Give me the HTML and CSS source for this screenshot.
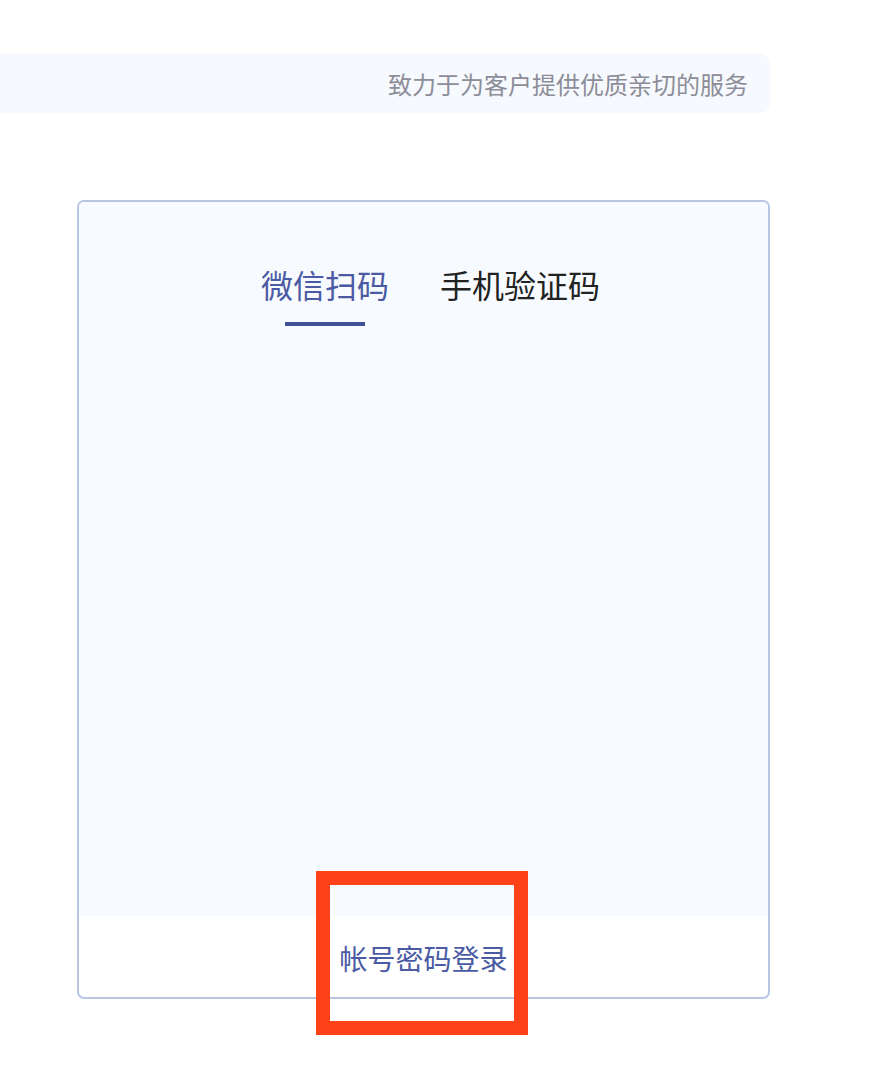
FILE: index.html
```html
<!DOCTYPE html>
<html lang="zh-CN">
<head>
    <meta charset="UTF-8">
    <meta name="viewport" content="width=device-width, initial-scale=1.0">
    <title>登录</title>
<link rel="stylesheet" href="styles.css">
</head>
<body>
    <div class="page">
        <div class="slogan">
            <p>致力于为客户提供优质亲切的服务</p>
        </div>

        <div class="login-box">
            <div class="login-main">
                <div class="tabs">
                    <div class="tab active">微信扫码</div>
                    <div class="tab">手机验证码</div>
                </div>
                <div class="qr-area"></div>
            </div>
            <div class="login-foot">
                <a class="switch-link" href="#">帐号密码登录</a>
            </div>
            <div class="highlight"></div>
        </div>
    </div>
</body>
</html>
```

FILE: styles.css
```css
html, body {
    margin: 0;
    background-color: #ffffff;
    font-family: "Noto Sans CJK SC", "Noto Sans", sans-serif;
    overflow: visible;
}

.page {
    padding: 54px 0 71px;
    min-height: 1070px;
    box-sizing: border-box;
}

.slogan {
    width: 770px;
    height: 59px;
    background-color: #f6f9fd;
    border-radius: 0 10px 10px 0;
    display: flex;
    align-items: center;
    justify-content: flex-end;
    padding-right: 22px;
    box-sizing: border-box;
}

.slogan p {
    margin: 0;
    font-size: 24px;
    color: #8c8d99;
    line-height: 1;
}

.login-box {
    margin: 87px 0 0 77px;
    width: 693px;
    height: 799px;
    border: 2px solid #b7c6e3;
    border-radius: 7px;
    box-sizing: border-box;
    display: flex;
    flex-direction: column;
    background-color: #ffffff;
    position: relative;
}

.login-main {
    height: 714px;
    background-color: #f7fafe;
    border-radius: 5px 5px 0 0;
    padding-top: 60px;
    box-sizing: border-box;
}

.tabs {
    display: flex;
    justify-content: center;
    gap: 51px;
    padding-left: 14px;
}

.tab {
    font-size: 32px;
    line-height: 44px;
    color: #222222;
    padding-bottom: 20px;
    position: relative;
}

.tab.active {
    color: #4b5ba3;
}

.tab.active::after {
    content: "";
    position: absolute;
    left: 50%;
    bottom: 0;
    width: 80px;
    height: 4px;
    margin-left: -40px;
    background-color: #3f5196;
}

.login-foot {
    flex: 1;
    display: flex;
    justify-content: center;
    align-items: center;
}

.switch-link {
    font-size: 28px;
    color: #4a5aa3;
    text-decoration: none;
    margin-top: 2px;
}

.highlight {
    position: absolute;
    left: 237px;
    top: 669px;
    width: 212px;
    height: 164px;
    border: 14px solid #fd4219;
    box-sizing: border-box;
    z-index: 2;
}
```
